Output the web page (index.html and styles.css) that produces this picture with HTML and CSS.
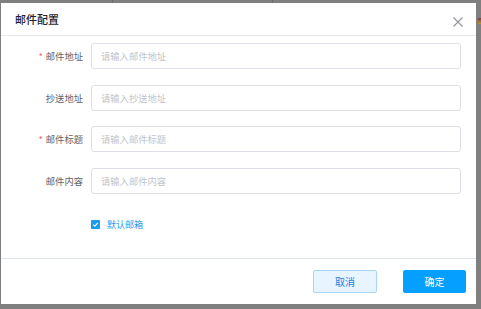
FILE: index.html
```html
<!DOCTYPE html>
<html lang="zh-CN">
<head>
    <meta charset="UTF-8">
    <meta name="viewport" content="width=device-width, initial-scale=1.0">
    <title>邮件配置</title>
    <link rel="stylesheet" href="styles.css">
</head>
<body>
    <div class="dialog">
        <div class="dialog-header">
            <span class="dialog-title">邮件配置</span>
            <button class="dialog-close" aria-label="关闭">
                <svg width="10" height="10" viewBox="0 0 10 10">
                    <path d="M0.5 0.5 L9.5 9.5 M9.5 0.5 L0.5 9.5" stroke="#909399" stroke-width="1.1" fill="none"/>
                </svg>
            </button>
        </div>

        <div class="dialog-body">
            <div class="form-item">
                <label class="form-label required">邮件地址</label>
                <input class="form-input" type="text" placeholder="请输入邮件地址">
            </div>
            <div class="form-item">
                <label class="form-label">抄送地址</label>
                <input class="form-input" type="text" placeholder="请输入抄送地址">
            </div>
            <div class="form-item">
                <label class="form-label required">邮件标题</label>
                <input class="form-input" type="text" placeholder="请输入邮件标题">
            </div>
            <div class="form-item">
                <label class="form-label">邮件内容</label>
                <input class="form-input" type="text" placeholder="请输入邮件内容">
            </div>
            <div class="form-check">
                <span class="checkbox">
                    <svg width="9" height="9" viewBox="0 0 9 9">
                        <path d="M2.2 4.6 L3.8 6.1 L6.9 2.8" stroke="#fff" stroke-width="1.1" fill="none"/>
                    </svg>
                </span>
                <span class="check-label">默认邮箱</span>
            </div>
        </div>

        <div class="dialog-footer">
            <button class="btn btn-plain">取消</button>
            <button class="btn btn-primary">确定</button>
        </div>
    </div>
</body>
</html>
```

FILE: styles.css
```css
body {
    margin: 0;
    height: 309px;
    overflow: hidden;
    background:
        linear-gradient(#6c6c6c, #6c6c6c) 112px 0 / 1px 3px no-repeat,
        linear-gradient(#6c6c6c, #6c6c6c) 272px 0 / 1px 3px no-repeat,
        linear-gradient(#7a3b3b, #b59a3a) 478px 18px / 3px 6px no-repeat,
        #7f7f7f;
    font-family: "Noto Sans CJK SC", "Noto Sans", sans-serif;
}

.dialog {
    box-sizing: border-box;
    width: 475px;
    height: 301px;
    margin: 3px 0 0 1px;
    background: #fff;
    display: flex;
    flex-direction: column;
}

.dialog-header {
    flex: none;
    height: 32px;
    border-bottom: 1px solid #e6e8ec;
    display: flex;
    align-items: center;
    justify-content: space-between;
    padding: 0 13px 0 14px;
}

.dialog-title {
    font-size: 11px;
    color: #1f2329;
    font-weight: 500;
    margin-top: -1px;
}

.dialog-close {
    border: none;
    background: none;
    padding: 0;
    width: 10px;
    height: 10px;
    margin-top: 6px;
    display: flex;
}

.dialog-body {
    flex: 1;
    padding: 7px 15px 0 0;
    display: flex;
    flex-direction: column;
    gap: 15.7px;
}

.form-item {
    display: flex;
    align-items: center;
    height: 26px;
}

.form-label {
    width: 82px;
    padding-right: 8px;
    text-align: right;
    font-size: 9.3px;
    color: #606266;
}

.form-label.required::before {
    content: "*";
    color: #f56c6c;
    margin-right: 3px;
}

.form-input {
    box-sizing: border-box;
    flex: 1;
    height: 26px;
    border: 1px solid #dcdfe6;
    border-radius: 3px;
    padding: 0 9px;
    font-family: inherit;
    font-size: 9.3px;
    color: #606266;
    outline: none;
}

.form-input::placeholder {
    color: #c0c4cc;
}

.form-check {
    display: flex;
    align-items: center;
    gap: 7px;
    padding-left: 90px;
    margin-top: 8px;
}

.checkbox {
    width: 9px;
    height: 9px;
    border-radius: 1px;
    background: #1a9bf0;
    display: flex;
}

.check-label {
    font-size: 9px;
    color: #1a9bf0;
}

.dialog-footer {
    flex: none;
    box-sizing: border-box;
    height: 46px;
    border-top: 1px solid #dde6f0;
    display: flex;
    justify-content: flex-end;
    align-items: flex-start;
    gap: 26px;
    padding: 11px 10px 0 0;
}

.btn {
    box-sizing: border-box;
    width: 64px;
    height: 23px;
    border-radius: 2px;
    font-family: inherit;
    font-size: 10px;
    padding: 0;
    cursor: pointer;
}

.btn-plain {
    background: #e8f4ff;
    border: 1px solid #a8d4ff;
    color: #1a84e0;
}

.btn-primary {
    width: 63px;
    background: #05a0ff;
    border: 1px solid #05a0ff;
    color: #fff;
}
```
